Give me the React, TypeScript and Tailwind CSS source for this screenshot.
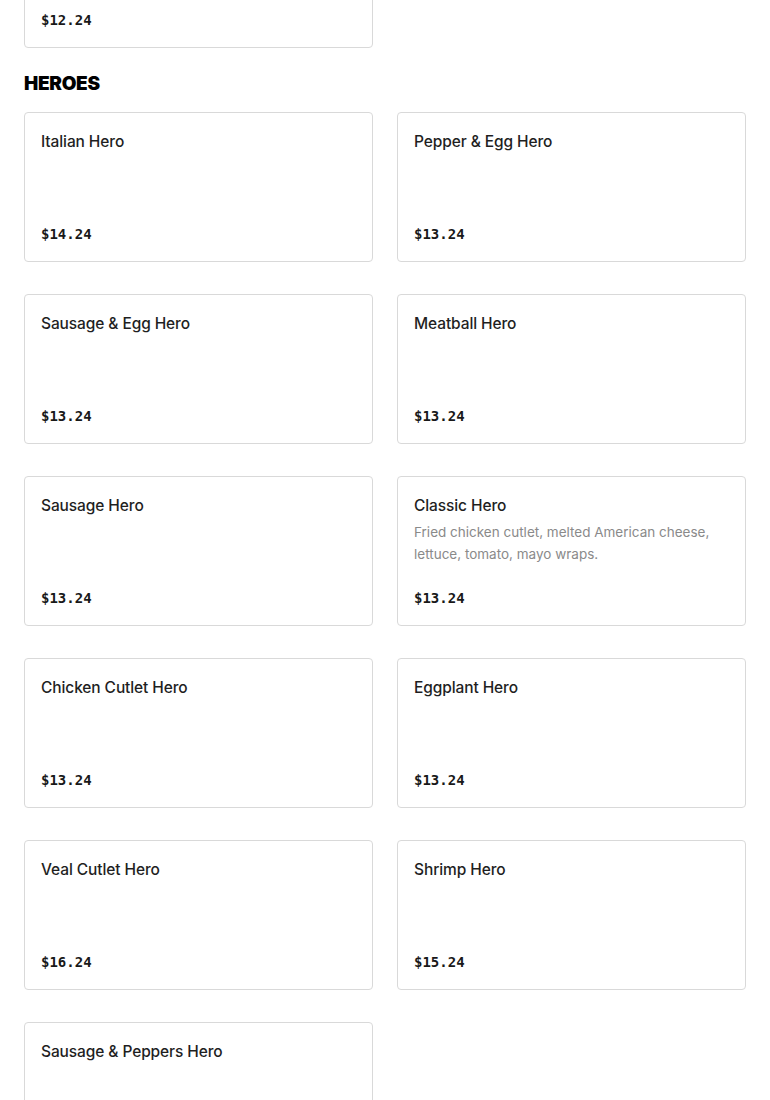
type Item = {
  name: string
  price: string
  description?: string
}

const HEROES: Item[] = [
  { name: 'Italian Hero', price: '$14.24' },
  { name: 'Pepper & Egg Hero', price: '$13.24' },
  { name: 'Sausage & Egg Hero', price: '$13.24' },
  { name: 'Meatball Hero', price: '$13.24' },
  { name: 'Sausage Hero', price: '$13.24' },
  {
    name: 'Classic Hero',
    price: '$13.24',
    description: 'Fried chicken cutlet, melted American cheese, lettuce, tomato, mayo wraps.',
  },
  { name: 'Chicken Cutlet Hero', price: '$13.24' },
  { name: 'Eggplant Hero', price: '$13.24' },
  { name: 'Veal Cutlet Hero', price: '$16.24' },
  { name: 'Shrimp Hero', price: '$15.24' },
  { name: 'Sausage & Peppers Hero', price: '$13.24' },
]

function ItemCard({ item }: { item: Item }) {
  return (
    <div className="h-[150px] flex flex-col border border-[#d9d9d9] rounded-[4px] bg-white px-4 pt-[17px] pb-4">
      <p className="text-[15.5px] leading-6 font-medium text-[#1f1f1f] font-['Inter',sans-serif] tracking-[-0.1px]">
        {item.name}
      </p>
      {item.description && (
        <p className="mt-[3px] text-[13.5px] leading-[22px] text-[#8a8a8a] font-['Inter',sans-serif]">
          {item.description}
        </p>
      )}
      <p className="mt-auto mb-px text-[14px] leading-5 font-semibold text-[#191919] font-['DejaVu_Sans_Mono',monospace]">
        {item.price}
      </p>
    </div>
  )
}

export default function App() {
  return (
    <div className="w-[770px] h-[1100px] overflow-hidden bg-white px-6">
      {/* tail of the previous section */}
      <div className="-mt-[102px] grid grid-cols-2 gap-x-6">
        <ItemCard item={{ name: 'Garden Salad', price: '$12.24' }} />
      </div>

      {/* Heroes */}
      <h2 className="mt-6 mb-4 text-[19px] leading-6 font-black text-black font-['Inter',sans-serif] tracking-[-0.3px]">
        HEROES
      </h2>
      <div className="grid grid-cols-2 gap-x-6 gap-y-8">
        {HEROES.map((item) => (
          <ItemCard key={item.name} item={item} />
        ))}
      </div>
    </div>
  )
}
